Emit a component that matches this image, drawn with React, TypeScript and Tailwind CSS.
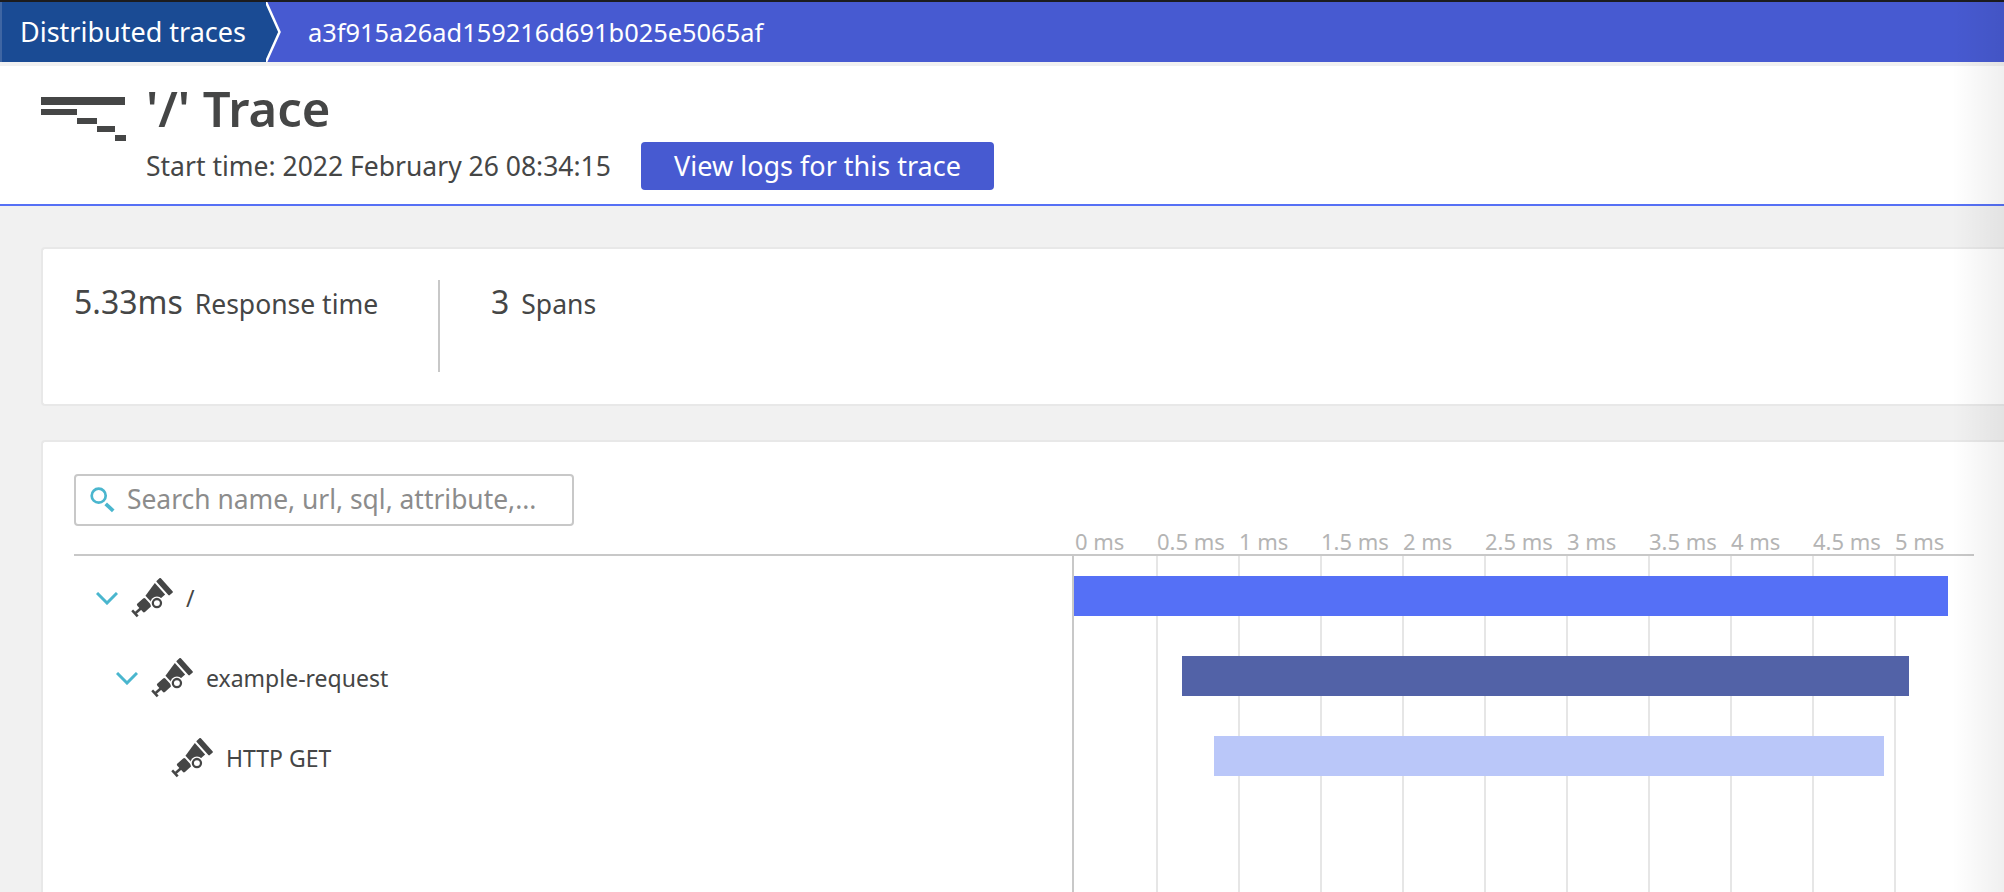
const ticks = ['0 ms', '0.5 ms', '1 ms', '1.5 ms', '2 ms', '2.5 ms', '3 ms', '3.5 ms', '4 ms', '4.5 ms', '5 ms'];

function SpanIcon() {
  return (
    <svg width="42" height="42" viewBox="0 0 41 41" className="shrink-0 text-[#454646]" fill="currentColor">
      <g transform="rotate(-42 20 20)">
        <rect x="-3" y="16" width="2.5" height="8" />
        <rect x="-1" y="19" width="7" height="2.5" />
        <rect x="5" y="14.5" width="10.5" height="11" rx="1.5" />
        <polygon points="17.5,14 32.5,11 32.5,26 17.5,26" />
        <rect x="34.5" y="10.5" width="5.5" height="19" rx="1" />
      </g>
      <circle cx="25.3" cy="24.5" r="6.5" fill="#fff" />
      <circle cx="25.3" cy="24.5" r="4" fill="none" stroke="currentColor" strokeWidth="2.2" />
    </svg>
  );
}

function Chevron() {
  return (
    <svg width="22" height="13" viewBox="0 0 22 13" className="-ml-[1px] -mr-[1px] shrink-0" fill="none" stroke="#4ab6ce" strokeWidth="3">
      <path d="M1 1l10 10 10-10" />
    </svg>
  );
}

function Row({ indent, caret, label, bar }: { indent: string; caret: boolean; label: string; bar: string }) {
  return (
    <div className="h-[80px] flex items-center">
      <div className={`w-[998px] flex items-center pt-[5px] ${indent}`}>
        {caret ? <Chevron /> : <div className="w-[20px]" />}
        <div className="ml-[14px]">
          <SpanIcon />
        </div>
        <span className="ml-[13px] text-[23px] text-[#454646]">{label}</span>
      </div>
      <div className={`relative h-[40px] ${bar}`} />
    </div>
  );
}

export default function App() {
  return (
    <div className="relative h-[892px] overflow-hidden bg-[#f1f1f1] font-['Noto_Sans',sans-serif] text-[#454646]">
      <div className="h-[2px] bg-[#1c1c1e]" />
      {/* breadcrumb */}
      <div className="flex h-[60px] items-center bg-[#475ad1] text-white">
        <div className="flex h-full w-[266px] items-center border-l-2 border-[#3f66a3] bg-[#1a4b94] pl-[18px] text-[27px]">
          Distributed traces
        </div>
        <svg width="16" height="60" viewBox="0 0 16 60" className="shrink-0">
          <path d="M0 0L13.5 30L0 60Z" fill="#1a4b94" />
          <path d="M0 0L13.5 30L0 60" fill="none" stroke="#fff" strokeWidth="2.5" />
        </svg>
        <span className="ml-[26px] text-[25.4px]">a3f915a26ad159216d691b025e5065af</span>
      </div>

      {/* title */}
      <div className="mt-[4px] flex h-[140px] border-b-2 border-[#5670f5] bg-white pl-[41px]">
        <svg width="86" height="46" viewBox="0 0 86 46" className="mt-[31px] shrink-0" fill="#454646">
          <rect x="0" y="0" width="84" height="8" />
          <rect x="0" y="12" width="36" height="6" />
          <rect x="36" y="21" width="20" height="6" />
          <rect x="56" y="29" width="18" height="6" />
          <rect x="74" y="38" width="11" height="6" />
        </svg>
        <div className="ml-[19px]">
          <div className="mt-[11px] text-[49px] font-semibold leading-[62px]">'/' Trace</div>
          <div className="flex items-center mt-[3px]">
            <span className="relative top-[1px] text-[26.5px] w-[495px] whitespace-nowrap">Start time: 2022 February 26 08:34:15</span>
            <button className="h-[48px] w-[353px] rounded-[4px] bg-[#475ad1] text-[27px] text-white">
              View logs for this trace
            </button>
          </div>
        </div>
      </div>

      {/* summary card */}
      <div className="ml-[41px] mt-[41px] flex h-[159px] rounded-l-[4px] border-2 border-r-0 border-[#e8e8e8] bg-white pl-[31px] pt-[31px]">
        <div className="-mt-[2px] flex w-[364px] items-baseline self-start">
          <span className="text-[32px]">5.33ms</span>
          <span className="ml-[12px] text-[26.5px]">Response time</span>
        </div>
        <div className="h-[92px] w-[2px] bg-[#c8c8c8]" />
        <div className="-mt-[2px] ml-[51px] flex items-baseline self-start">
          <span className="text-[32px]">3</span>
          <span className="ml-[12px] text-[26.5px]">Spans</span>
        </div>
      </div>

      {/* trace card */}
      <div className="ml-[41px] mt-[34px] h-[500px] rounded-l-[4px] border-2 border-r-0 border-[#e8e8e8] bg-white pl-[31px] pt-[32px]">
        <div className="flex h-[52px] w-[500px] items-center rounded-[4px] border-2 border-[#c8c8c8] pl-[13px]">
          <svg width="28" height="28" viewBox="0 0 26 26" className="shrink-0" fill="none" stroke="#4ab6ce">
            <circle cx="9" cy="9" r="6.5" strokeWidth="2.5" />
            <path d="M15.5 16.5l7 6.5" strokeWidth="3.5" />
          </svg>
          <input
            readOnly
            placeholder="Search name, url, sql, attribute,..."
            className="ml-[10px] w-[440px] bg-transparent text-[26.4px] outline-none placeholder:text-[#8c8c8c]"
          />
        </div>

        <div className="flex h-[30px] w-[1900px] items-center border-b-2 border-[#c8c8c8] pl-[998px]">
          <div className="flex pl-[3px] pt-[2px] text-[22px] leading-[28px] text-[#b4b4b4]">
            {ticks.map((t) => (
              <span key={t} className="w-[82px] whitespace-nowrap">{t}</span>
            ))}
          </div>
        </div>

        <div className="relative">
          {/* grid lines sit behind the bars */}
          <div className="absolute bottom-[-200px] left-[998px] top-0 flex border-l-2 border-[#c8c8c8]">
            {ticks.map((t, i) => (
              <div key={t} className={i === 0 ? 'w-[82px]' : 'w-[82px] border-l-2 border-[#e6e6e6]'} />
            ))}
          </div>
          <Row indent="pl-[23px]" caret label="/" bar="ml-[2px] w-[874px] bg-[#5570f6]" />
          <Row indent="pl-[43px]" caret label="example-request" bar="ml-[110px] w-[727px] bg-[#5262a7]" />
          <Row indent="pl-[63px]" caret={false} label="HTTP GET" bar="ml-[142px] w-[670px] bg-[#bac7f9]" />
        </div>
      </div>

      {/* fade on the right edge */}
      <div className="pointer-events-none absolute bottom-0 right-0 top-0 w-[52px] bg-gradient-to-r from-transparent to-black/[0.06]" />
    </div>
  );
}
